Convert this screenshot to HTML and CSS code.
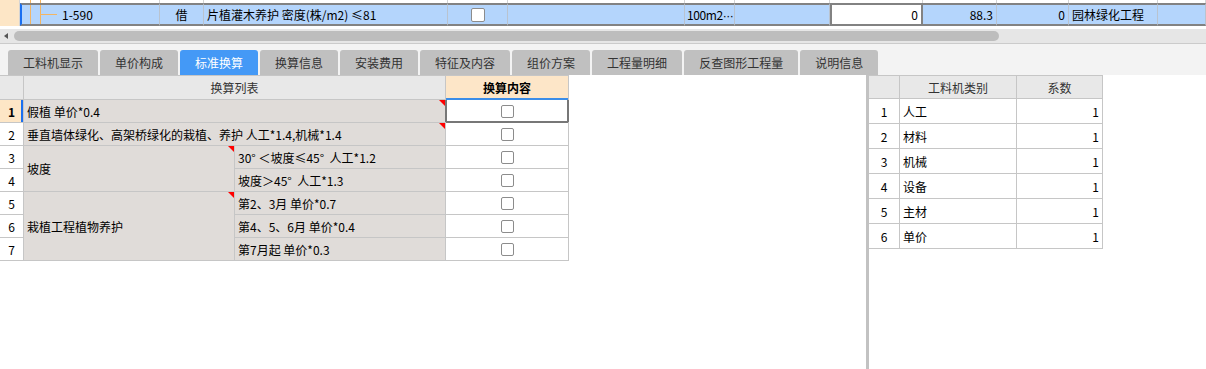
FILE: index.html
```html
<!DOCTYPE html>
<html lang="zh-CN">
<head>
    <meta charset="UTF-8">
    <meta name="viewport" content="width=device-width, initial-scale=1.0">
    <title>标准换算</title>
    <link rel="stylesheet" href="styles.css">
</head>
<body>
    <!-- 上方清单行 -->
    <div class="top-grid">
        <div class="row row-prev">
            <div class="cell hdr"></div>
            <div class="cell tree"></div>
            <div class="cell"></div>
            <div class="cell"></div>
            <div class="cell"></div>
            <div class="cell"></div>
            <div class="cell"></div>
            <div class="cell"></div>
            <div class="cell"></div>
            <div class="cell"></div>
            <div class="cell"></div>
            <div class="cell"></div>
            <div class="cell"></div>
        </div>
        <div class="row row-cur">
            <div class="cell hdr"></div>
            <div class="cell tree">1-590</div>
            <div class="cell center">借</div>
            <div class="cell">片植灌木养护 密度(株/m2) ≤81</div>
            <div class="cell center"><span class="check"></span></div>
            <div class="cell"></div>
            <div class="cell unit">100m2<span class="dots">···</span></div>
            <div class="cell"></div>
            <div class="cell edit right">0</div>
            <div class="cell right">88.3</div>
            <div class="cell right">0</div>
            <div class="cell">园林绿化工程</div>
            <div class="cell"></div>
        </div>
    </div>

    <div class="hscroll">
        <span class="arrow"></span>
        <span class="thumb"></span>
    </div>

    <div class="tabs">
        <div class="tab">工料机显示</div>
        <div class="tab">单价构成</div>
        <div class="tab active">标准换算</div>
        <div class="tab">换算信息</div>
        <div class="tab">安装费用</div>
        <div class="tab">特征及内容</div>
        <div class="tab">组价方案</div>
        <div class="tab">工程量明细</div>
        <div class="tab">反查图形工程量</div>
        <div class="tab">说明信息</div>
    </div>

    <div class="panels">
        <div class="left-pane">
            <div class="std-grid">
                <div class="c head"></div>
                <div class="c head center span2">换算列表</div>
                <div class="c head center picked">换算内容</div>

                <div class="c num cur">1</div>
                <div class="c item span2 mark">假植 单价*0.4</div>
                <div class="c box sel"><span class="check"></span></div>

                <div class="c num">2</div>
                <div class="c item span2 mark">垂直墙体绿化、高架桥绿化的栽植、养护 人工*1.4,机械*1.4</div>
                <div class="c box"><span class="check"></span></div>

                <div class="c num">3</div>
                <div class="c item rows2 mark">坡度</div>
                <div class="c item">30° ＜坡度≤45°  人工*1.2</div>
                <div class="c box"><span class="check"></span></div>

                <div class="c num">4</div>
                <div class="c item">坡度＞45°  人工*1.3</div>
                <div class="c box"><span class="check"></span></div>

                <div class="c num">5</div>
                <div class="c item rows3 mark">栽植工程植物养护</div>
                <div class="c item">第2、3月 单价*0.7</div>
                <div class="c box"><span class="check"></span></div>

                <div class="c num">6</div>
                <div class="c item">第4、5、6月 单价*0.4</div>
                <div class="c box"><span class="check"></span></div>

                <div class="c num">7</div>
                <div class="c item">第7月起 单价*0.3</div>
                <div class="c box"><span class="check"></span></div>
            </div>
        </div>

        <div class="splitter"></div>

        <div class="right-pane">
            <div class="coef-grid">
                <div class="c head"></div>
                <div class="c head center">工料机类别</div>
                <div class="c head center">系数</div>

                <div class="c num">1</div>
                <div class="c">人工</div>
                <div class="c right">1</div>

                <div class="c num">2</div>
                <div class="c">材料</div>
                <div class="c right">1</div>

                <div class="c num">3</div>
                <div class="c">机械</div>
                <div class="c right">1</div>

                <div class="c num">4</div>
                <div class="c">设备</div>
                <div class="c right">1</div>

                <div class="c num">5</div>
                <div class="c">主材</div>
                <div class="c right">1</div>

                <div class="c num">6</div>
                <div class="c">单价</div>
                <div class="c right">1</div>
            </div>
        </div>
    </div>
</body>
</html>
```

FILE: styles.css
```css
body {
    margin: 0;
    width: 1206px;
    height: 369px;
    overflow: hidden;
    background: #ffffff;
    font-family: "Noto Sans CJK SC", "Liberation Sans", sans-serif;
    font-size: 12px;
    color: #000000;
}

/* 上方清单行 */
.top-grid {
    height: 29px;
    background: #ffffff;
}

.row {
    display: grid;
    grid-template-columns: 20px 140px 44px 244px 60px 177px 50px 95px 93px 74px 72px 89px 1fr;
}

.row .cell {
    box-sizing: border-box;
    border-right: 1px solid #d4d4d4;
    white-space: nowrap;
    overflow: hidden;
}

.row-prev {
    height: 3px;
}

.row-cur {
    height: 23px;
}

.row .hdr {
    background: #fde6c6;
}

.row-prev .tree {
    background:
        linear-gradient(#f3b563, #f3b563) no-repeat 10px 0 / 1px 100%,
        linear-gradient(#f3b563, #f3b563) no-repeat 20px 0 / 1px 100%;
}

.row-cur .cell {
    border-top: 2px solid #828282;
    border-bottom: 2px solid #828282;
    border-right-color: #b9c3cf;
    background-color: #b4d5fc;
    line-height: 19px;
    padding: 0 3px;
}

.row-cur .hdr {
    border-top: none;
    border-bottom: none;
    border-right: 1px solid #d4d4d4;
    background-color: #fde6c6;
    padding: 0;
}

.row-cur .tree {
    border-left: 2px solid #1a6ff0;
    padding-left: 40px;
    background-image:
        linear-gradient(#f3b563, #f3b563),
        linear-gradient(#f3b563, #f3b563),
        linear-gradient(#f3b563, #f3b563);
    background-repeat: no-repeat;
    background-position: 8px 0, 18px 0, 18px 9px;
    background-size: 1px 100%, 1px 100%, 17px 1px;
}

.row-cur .unit {
    padding: 0;
    padding-left: 2px;
    letter-spacing: -0.4px;
}

.unit .dots {
    font-family: "Liberation Sans", sans-serif;
    letter-spacing: -0.5px;
}

.row-cur .edit {
    background-color: #ffffff;
    border-left: 2px solid #828282;
    border-right: 2px solid #828282;
    padding-right: 3px;
}

.center {
    text-align: center;
}

.right {
    text-align: right;
}

.row-cur .center {
    display: flex;
    align-items: center;
    justify-content: center;
}

.check {
    display: inline-block;
    box-sizing: border-box;
    width: 13px;
    height: 13px;
    border: 1px solid #8c8c8c;
    border-radius: 2px;
    background: #ffffff;
}

.row-cur .check {
    width: 14px;
    height: 14px;
}

/* 横向滚动条 */
.hscroll {
    position: relative;
    height: 14px;
    background: #e6e6e6;
    border-bottom: 1px solid #cbcbcb;
}

.hscroll .arrow {
    position: absolute;
    left: 4px;
    top: 4px;
    border-right: 4px solid #555555;
    border-top: 3px solid transparent;
    border-bottom: 3px solid transparent;
}

.hscroll .thumb {
    position: absolute;
    left: 14px;
    top: 2px;
    width: 985px;
    height: 10px;
    border-radius: 5px;
    background: #bdbdbd;
}

/* 页签 */
.tabs {
    display: flex;
    gap: 2px;
    box-sizing: border-box;
    height: 31px;
    padding: 6px 0 0 8px;
    background: #f3f3f3;
}

.tab {
    height: 25px;
    line-height: 25px;
    padding: 0 15px;
    background: #c0c0c0;
    border-radius: 3px 3px 0 0;
    color: #333333;
    white-space: nowrap;
}

.tab.active {
    background: #4499f6;
    color: #ffffff;
}

/* 下方面板 */
.panels {
    display: flex;
    height: 294px;
}

.left-pane {
    width: 866px;
    background: #ffffff;
}

.splitter {
    width: 3px;
    background: #c2c2c2;
}

.right-pane {
    flex: 1;
    background: #ffffff;
}

.std-grid,
.coef-grid {
    display: inline-grid;
    gap: 1px;
    padding: 1px 1px 1px 0;
    background: #c6c6c6;
}

.std-grid {
    grid-template-columns: 23px 210px 210px 122px;
    grid-template-rows: 23px repeat(7, 22px);
}

.coef-grid {
    grid-template-columns: 30px 116px 85px;
    grid-template-rows: 22px repeat(6, 24px);
}

.c {
    position: relative;
    display: flex;
    align-items: center;
    padding: 0 3px;
    background: #ffffff;
    white-space: pre;
    overflow: hidden;
}

.c.center {
    justify-content: center;
}

.c.right {
    justify-content: flex-end;
}

.c.head {
    background: #e8e8e8;
    color: #333333;
}

.c.head.picked {
    background: #fde6c8;
    color: #000000;
    font-weight: bold;
    box-shadow: inset 0 -1px #3b8de8;
}

.c.num {
    justify-content: center;
    padding: 0;
}

.c.num.cur {
    background: #fde6c6;
    font-weight: bold;
    box-shadow: inset -2px 0 #1a6ff0;
}

.c.item {
    background: #e0dcd9;
}

.span2 {
    grid-column: span 2;
}

.rows2 {
    grid-row: span 2;
}

.rows3 {
    grid-row: span 3;
}

/* 右上角红色标记 */
.mark::after {
    content: "";
    position: absolute;
    top: 0;
    right: 0;
    border-top: 6px solid #ff0000;
    border-left: 6px solid transparent;
}

.c.box {
    justify-content: center;
}

.c.box.sel {
    box-shadow:
        inset 1px 0 #777777,
        inset -1px 0 #777777,
        inset 0 -1px #777777,
        -1px 0 #777777,
        1px 0 #777777,
        0 1px #777777,
        0 -1px #3b8de8;
}
```
